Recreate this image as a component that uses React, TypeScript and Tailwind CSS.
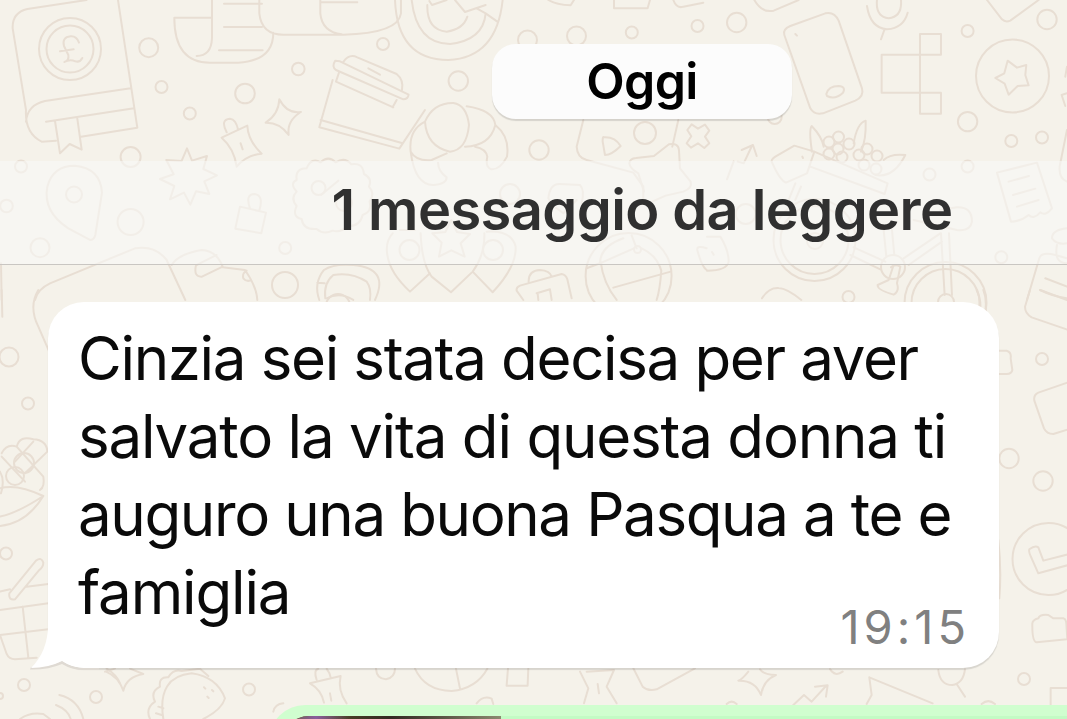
const doodles = {
  left: [
    // bank book
    'M78 330 L38 85 Q36 38 82 27 L260 0 M354 0 L412 383 L243 410 M78 330 Q74 400 125 425 L168 422 M78 365 Q82 315 135 303 L392 265 M138 365 L402 325 M165 363 L180 460 L209 432 L245 449 L232 356',
    'M237 128 Q230 108 212 109 Q185 112 192 138 L205 165 Q208 182 193 186 Q210 176 226 184 Q240 188 247 174 M180 154 L221 148',
    // papers
    'M523 53 L636 53 M523 53 Q523 188 630 188 L715 188 Q820 182 820 98 M636 0 L636 115 Q634 168 590 168 M672 11 L786 11 M672 81 L786 81 M657 151 L788 151 M778 0 L778 40 Q785 104 850 104 L1030 104 Q1195 100 1203 40 L1203 0 M961 0 L961 40 Q966 95 1025 103 M961 7 L1072 7',
    // coffee cup
    'M998 240 L958 382 L1198 446 L1275 330 M962 360 L1208 430 M1006 182 Q994 200 1008 210 L1210 298 Q1224 298 1226 284 L1020 184 Z M1018 215 L1008 245 L1180 322 M1178 322 L1190 300 M1030 186 Q1048 160 1072 172 L1190 222 Q1212 240 1206 270 M1105 205 L1140 224',
    // sparkle
    'M838 298 Q862 343 903 336 Q860 362 866 405 Q840 367 797 368 Q836 344 838 298 Z',
    // pin
    'M665 413 L742 377 Q744 422 785 461 Q740 465 710 500 Q703 446 665 413 Z M680 397 Q660 358 690 356 Q708 358 714 388 M722 430 L728 448',
    // burst
    'M561 445 L576 482 L621 468 L610 507 L651 526 L613 544 L628 582 L588 574 L571 614 L552 578 L510 598 L523 558 L480 537 L521 523 L499 480 L545 483 Z',
    // location
    'M270 720 L205 685 Q128 635 142 560 Q158 497 225 497 Q302 505 306 578 L286 705 Q282 720 270 720 Z',
    // padlock
    'M720 620 L798 638 L784 700 L706 686 Z M750 625 Q735 582 764 582 Q792 586 778 632',
    // rounded sign
    'M105 900 Q112 868 150 850 L405 745 Q465 735 500 780 L556 900',
    'M515 795 Q535 762 605 750 Q650 752 668 800 L606 830 Q580 832 588 796 L650 765 M668 802 L735 810 Q770 860 772 900 M740 812 Q726 820 730 835 Q738 845 750 842',
    // pretzel
    'M958 900 Q940 850 972 810 Q1000 790 1060 795 Q1170 805 1125 900 M976 895 Q970 850 1000 825 Q1055 815 1100 845 Q1115 865 1110 900 M980 895 Q1020 875 1060 900 M952 848 L974 850',
    'M964 584 L1015 542 M3 790 L5 900',
    // percent badge
    'M890 575 Q868 550 890 540 Q885 505 920 505 Q935 470 962 487 Q985 465 1007 487 Q1035 470 1054 493 Q1088 486 1092 522 Q1118 535 1107 560 Q1126 580 1109 605 Q1118 635 1088 645 Q1080 680 1044 678 Q1020 700 998 692 Q970 705 950 687 Q910 690 905 657 Q875 650 890 618 Q870 595 890 575 Z',
  ],
  middle: [
    // spiral
    'M135 0 Q142 180 295 180 Q440 174 458 0 M185 0 Q200 132 300 132 Q400 120 407 40 L442 65 M232 15 Q230 90 290 95 Q340 88 352 50 M238 3 L246 15 L290 0 M315 0 L345 36 L407 15 M407 40 L380 25',
    // croissant
    'M225 365 Q250 308 310 309 Q350 315 357 375 Q350 450 300 455 Q230 440 225 365 Z M350 319 Q430 330 436 375 Q420 438 345 440 M225 365 Q175 390 182 455 Q200 485 245 480 L290 460 M182 455 Q195 557 252 555 Q290 552 290 532 Q265 515 264 488 M436 375 Q480 410 471 470 Q450 510 424 508 Q405 502 412 470 Q408 446 375 440',
    // playing card and star
    'M700 360 L680 440 Q682 474 710 480 L850 518 L880 560 L880 600 M985 360 L967 440 M762 412 Q758 408 758 424 L765 465 Q785 465 812 438 Q795 410 762 412 Z',
    'M838 490 Q840 475 858 474 L912 468 L957 433 Q985 428 987 450 L990 505 L1022 545 Q1028 565 1000 575 L947 587 L900 608 M838 490 Q840 505 865 520 L882 575',
    'M1012 390 L1025 373 L1044 386 L1065 374 L1078 392 L1065 410 L1078 430 L1063 444 L1044 430 L1023 443 L1010 430 L1024 409 Z',
    'M595 595 Q600 550 630 552 L690 555 Q705 570 695 610 M595 595 Q610 620 620 625 L640 640 L680 600',
    // balloons
    'M128 700 Q105 725 112 765 Q120 820 180 875 L240 820 M150 690 L195 690 M212 700 Q215 790 245 830 L303 877 L368 815 Q405 765 403 700 M410 695 Q485 690 497 740 Q500 800 428 877 L368 815',
    'M304 660 L321 696 L360 702 L332 730 L344 770 L304 751 L267 770 L275 728 L247 700 L286 696 Z',
    // ball
    'M710 805 L750 790 L852 745 M752 785 Q760 850 800 900 M875 745 Q920 765 934 812 Q930 870 920 900 M790 863 L962 815 M860 745 L845 706 M750 790 Q750 740 820 715',
    // briefcase
    'M520 900 L500 872 Q498 862 510 857 L635 822 Q648 824 652 838 L665 895 M536 845 Q535 812 570 810 Q600 812 605 830 M560 880 L600 868 L605 900 M563 880 L565 900 M585 650 L590 640 M1070 745 Q1040 735 1042 750 Q1055 800 1070 810',
    'M595 0 Q620 15 662 16 L672 0 M792 0 L792 25 L893 25 L900 0 M970 0 Q980 27 1000 20 L1060 8',
  ],
  right: [
    'M142 0 Q165 40 200 32 L275 0',
    // phone
    'M232 105 Q226 88 250 78 L355 40 Q382 34 395 62 L465 265 Q472 290 445 302 L348 340 Q322 346 310 325 Z M358 282 Q364 258 395 258 Q418 260 408 278 Q385 300 360 288 Z M265 102 L270 107',
    // microphone
    'M480 18 Q490 84 540 88 Q590 84 602 38 M510 0 Q505 50 545 55 Q586 50 582 0 M532 90 L522 118',
    // squares
    'M524 164 L702 164 L702 102 L639 102 L639 341 L702 341 L702 278 L524 278 Z',
    'M840 0 L885 58 Q895 68 910 62 L995 0',
    'M902 182 L930 203 L958 195 L955 225 L965 256 L932 258 L905 284 L893 251 L865 234 L892 220 Z',
    'M1080 200 L1075 230 M1080 280 L1064 285 L1075 318 M1080 390 L1058 500 Q1055 535 1080 545',
    // arrow
    'M60 538 L80 484 M92 485 L110 490 L136 435 M104 450 L138 435 L149 468',
    // flower basket
    'M195 487 Q190 480 205 470 L262 437 L322 455 L300 520 L237 548 Q218 540 195 487 Z M322 455 L542 550 L533 582 L310 500 M315 455 Q305 390 314 378 Q345 410 350 440 M440 430 Q450 370 476 362 Q478 420 462 455 M505 525 Q560 535 595 465 Q550 460 530 480 M286 470 L288 474',
    // bicycle
    'M245 600 L265 550 M265 600 L282 560 M530 690 L538 770 M555 690 L562 765 M440 742 L535 785 M430 765 L520 808 M590 775 L700 700 M605 795 L705 725 M702 700 L713 885 M726 700 L735 885 M620 660 L750 690 Q790 695 795 665 Q795 620 750 622 L700 630 M560 795 L545 840 L512 855 Q510 870 560 884 Q578 875 570 850 L580 800 Q565 790 552 802',
    // receipt
    'M870 518 L990 488 L1035 625 Q1015 650 1000 637 Q980 660 965 645 Q940 665 912 665 Z M905 545 L966 528 M918 585 L985 566 M930 620 L995 600',
    // notepad and tag
    'M960 900 L997 775 Q1003 755 1045 765 L1080 775 M1015 835 L1080 860 M1000 870 L1080 900 M1080 685 Q1035 690 1035 715 Q1050 735 1080 730 M1050 735 Q1040 790 1080 790',
    'M0 710 L40 710 Q65 750 65 785 Q60 812 0 812 M15 756 L20 764',
    'M165 895 Q185 862 215 864 Q240 865 283 900',
  ],
  lowerLeft: [
    'M115 0 Q85 50 115 110 L150 190 M5 0 L7 80',
    // raspberry
    'M5 490 Q20 460 50 470 Q60 435 100 448 Q140 450 142 485 M50 470 L130 560 M5 500 L75 575 M100 455 L45 515 M142 485 L75 550 M130 560 Q135 590 120 600',
    'M0 595 Q50 580 130 618 Q80 700 0 708 M0 680 Q50 670 130 618 M0 545 Q15 570 3 610',
    'M28 910 L108 812 Q125 800 130 818 Q130 830 118 840 L45 928 Q25 932 28 910 Z M0 905 L30 898 M80 890 L145 882 M0 960 L145 940 M0 1035 L145 1018 M68 950 L85 1103 M0 1035 L20 1092 Q27 1108 45 1108 L110 1103',
    'M60 1287 Q90 1265 130 1272 L150 1287 M178 1215 Q235 1228 250 1287 M168 1245 Q205 1260 212 1287 M320 1136 Q350 1155 360 1180',
  ],
  lowerRight: [
    'M50 0 Q65 30 60 65 M70 0 Q82 30 75 70 M210 0 L195 50 Q195 70 215 82 L325 120 M240 0 Q280 20 325 25',
    'M115 182 L140 182 Q155 186 152 205 L157 240 Q155 252 140 252 L115 252 M325 277 L235 308 Q220 315 223 332 L252 415 Q260 432 280 432 L325 418',
    // check badge
    'M325 793 L250 812 L235 772 Q225 765 208 778 Q205 785 215 805 L235 850 L325 825 M115 750 Q125 840 118 925',
    // folder
    'M217 1000 Q218 990 235 985 Q240 972 265 975 L280 985 L310 985 Q318 987 319 1000 L322 1048 L230 1057 Q216 1056 217 1000 Z M272 1245 L272 1194 L325 1194',
  ],
  bottom: [
    'M15 215 L45 206 M90 206 L130 222 Q80 230 70 272 Q55 230 18 215',
    // taco
    'M190 357 Q170 230 275 220 Q350 230 375 295 Q365 330 310 357 M150 357 Q135 325 165 305 Q150 275 180 260 Q175 230 205 232 Q220 206 245 213 L300 206 L325 228 M312 262 L316 266 M336 270 L340 274 M322 290 L326 294 M175 320 L190 325 M168 340 L185 345',
    'M630 250 L722 228 Q712 270 740 310 M630 250 Q665 270 672 308 M650 240 Q640 210 655 206 M692 232 Q690 220 680 206 M690 280 L694 302',
    'M828 206 Q830 237 858 238 Q885 232 885 206 M945 206 Q975 272 1055 273 Q1130 265 1162 206 M1068 206 L1080 265 M1224 206 L1220 257 L1283 257 L1285 206 M520 335 Q525 312 550 310 M1130 310 Q1150 285 1175 296 L1180 312',
  ],
  bottomRight: [
    'M0 245 L25 295 L12 340 M20 245 L102 240 L80 290 L110 340 M53 282 L57 310 M160 235 L188 290 Q205 305 230 298 L345 235',
    'M505 245 Q485 270 475 272 Q525 270 543 315 Q550 270 588 255 Q550 255 540 238',
    'M640 345 L672 315 L695 335 L738 288 M705 290 L743 286 L738 320 M868 262 L875 315 L860 342 M868 262 L1058 340 M750 237 Q765 262 788 245 M1130 282 L1155 320 M1075 240 Q1080 285 1117 285 Q1150 280 1155 238 M440 342 Q455 328 470 342 M1205 342 Q1225 325 1245 342',
  ],
};

const circles = [
  [70, 49, 31], [70, 49, 23.5], [148.7, 47.7, 9.5], [161.5, 87, 6], [189.8, 113.5, 6], [245, 93.5, 9.8], [298.3, 69, 6.3],
  [130.6, 157, 10], [21, 166.5, 6], [6.5, 206, 6.3], [74, 194.5, 8], [40, 247.7, 9.5], [130.6, 222, 13], [285.2, 248, 6], [285, 285, 13],
  [318.5, 188, 7], [344, 203, 8], [338, 306, 12],
  [383, 44, 6], [458.3, 81, 9.7], [539, 150, 9.7], [576.5, 36, 9.5], [527.5, 40, 9.5], [631.8, 32.5, 6], [697.5, 26, 6], [645, 133, 11],
  [510, 194, 10], [409.5, 250, 10], [493, 250, 10], [628.6, 276, 43], [637.5, 249.5, 3.5],
  [736.7, 22.5, 9.7], [967.6, 121.6, 9.7], [1047, 19.5, 9.7], [1012.5, 76, 36.5], [967.6, 31, 6], [1011.3, 141, 6], [1042, 137.5, 6],
  [774.7, 117, 7], [929.5, 174.5, 6], [967.6, 166.5, 6], [1001.3, 257.3, 6], [745.7, 214, 10], [848.5, 297, 6],
  [814.5, 240, 41], [814.5, 240, 34], [815, 241, 8], [945.5, 303, 41], [945.5, 303, 34], [946, 302, 8], [893, 267, 12],
  [829, 142, 5.5], [838.5, 137, 5.5], [849, 144, 5.5], [838, 149, 5.5], [829, 154, 5.5], [842, 157, 5.5], [859, 155, 5.5], [867, 149, 5.5], [877, 156, 5.5], [864, 165, 5.5], [876, 169, 5.5],
  [9, 357, 9.5], [28, 403.5, 6], [6, 553.5, 6], [24, 685, 6], [96, 697, 6], [15, 476, 9], [24, 463, 10],
  [1042, 359, 6], [1009, 458.5, 9.7], [1043, 481, 9.7], [1048.5, 559, 36], [1024, 679, 6], [249, 689.5, 6], [0, 696, 3],
];

function DoodleGroup({ paths, transform }: { paths: string[]; transform: string }) {
  return (
    <g transform={transform} strokeWidth={6}>
      {paths.map((d, index) => (
        <path key={index} d={d} />
      ))}
    </g>
  );
}

function Wallpaper() {
  return (
    <svg
      className="absolute inset-0 text-[#e8ded3]"
      width="1067"
      height="719"
      viewBox="0 0 1067 719"
      fill="none"
      stroke="currentColor"
      strokeWidth={2}
      strokeLinecap="round"
      strokeLinejoin="round"
      aria-hidden="true"
    >
      <DoodleGroup paths={doodles.left} transform="scale(.3333)" />
      <DoodleGroup paths={doodles.middle} transform="translate(350 0) scale(.3333)" />
      <DoodleGroup paths={doodles.right} transform="translate(707 0) scale(.3333)" />
      <DoodleGroup paths={doodles.lowerLeft} transform="translate(0 290) scale(.3333)" />
      <DoodleGroup paths={doodles.lowerRight} transform="translate(960 290) scale(.3333)" />
      <DoodleGroup paths={doodles.bottom} transform="translate(100 600) scale(.3333)" />
      <DoodleGroup paths={doodles.bottomRight} transform="translate(580 590) scale(.3333)" />
      {circles.map(([cx, cy, r], index) => (
        <circle key={index} cx={cx} cy={cy} r={r} />
      ))}
    </svg>
  );
}

function MessageBubble() {
  return (
    <div className="relative ml-12 mt-[37px] h-[366px] w-[951px] shrink-0 rounded-[36px] bg-white pl-[30px] pt-[17px] text-[60px] leading-[78px] text-[#0a0a0a] shadow-[0_2px_1px_rgba(0,0,0,0.12)]">
      <svg className="absolute -left-[18px] bottom-[-3px]" width="70" height="60" viewBox="0 0 70 60" aria-hidden="true">
        <path d="M1 56 Q18 56 32 50 Q42 57 54 57 L69 57 L69 59 L54 59 Q42 59 32 53 Q18 59 0 58.5 Z" fill="#dfdad3" />
        <path d="M18 0 L18 14 Q18 40 1 57 Q18 57 32 50 Q42 57 56 57 L69 57 L69 0 Z" fill="#fff" />
      </svg>
      <div className="relative whitespace-nowrap">
        <p className="tracking-[-1.34px]">Cinzia sei stata decisa per aver</p>
        <p className="tracking-[-1.2px]">salvato la vita di questa donna ti</p>
        <p className="tracking-[-1.38px]">auguro una buona Pasqua a te e</p>
        <p className="tracking-[-1.15px]">famiglia</p>
      </div>
      <time className="absolute bottom-[12px] right-[29px] text-[47px] leading-[58px] tracking-[4px] text-[#808080]">19:15</time>
    </div>
  );
}

export default function App() {
  return (
    <main className="relative h-[719px] w-[1067px] overflow-hidden bg-[#f5f2ea] font-['Inter',sans-serif]">
      <Wallpaper />
      <div className="relative flex h-full flex-col">
        <header className="flex h-[161px] shrink-0 pl-[492px] pt-[44px]">
          <div className="flex h-[75px] w-[300px] items-center justify-center rounded-[24px] bg-[#fcfcfc] text-[50px] font-semibold text-black shadow-[0_2px_1px_rgba(0,0,0,0.13)]">
            <span className="tracking-[-0.7px]">Oggi</span>
          </div>
        </header>
        <div className="flex h-[104px] shrink-0 items-center justify-center border-b border-[#c9c6c2] bg-[#f9f9f7]/60 pb-[6px] pl-[217px] text-[56px] font-semibold text-[#303030]">
          <span className="whitespace-nowrap tracking-[-0.6px]">1 messaggio da leggere</span>
        </div>
        <MessageBubble />
        <div className="ml-[269px] mt-[37px] h-[60px] w-[840px] shrink-0 rounded-tl-[36px] bg-[#d0fecf] pl-[12px] pt-[11px]">
          <div className="flex h-[50px] overflow-hidden rounded-tl-[28px] bg-[#c3fbc4]">
            <div className="w-[220px] bg-gradient-to-r from-[#6b5a20] via-[#332b22] to-[#8c8b70]">
              <div className="h-full w-[70px] bg-gradient-to-r from-[#6b5a20] via-[#8a5d9c] to-transparent" />
            </div>
          </div>
        </div>
      </div>
    </main>
  );
}
